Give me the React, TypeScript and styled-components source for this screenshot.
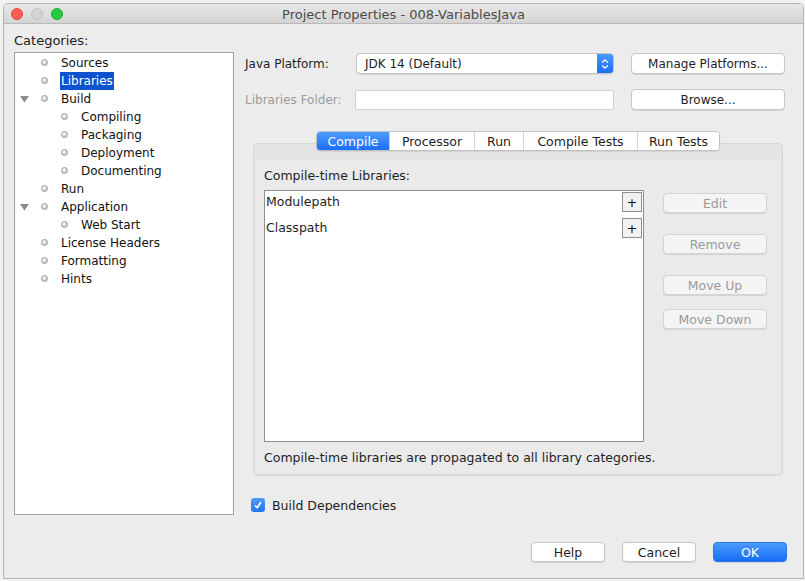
import React from "react";
import styled, { createGlobalStyle } from "styled-components";

const Global = createGlobalStyle`
  html, body { margin: 0; padding: 0; }
  body {
    background: #f2f2f2;
    font-family: "DejaVu Sans", "Liberation Sans", sans-serif;
    font-size: 12px;
    color: #1e1e1e;
  }
`;

const Page = styled.div`
  width: 805px;
  height: 581px;
  overflow: hidden;
  padding: 3px 0 0 3px;
  box-sizing: border-box;
`;

const Window = styled.div`
  width: 801px;
  height: 576px;
  box-sizing: border-box;
  border: 1px solid #b3b3b3;
  border-radius: 5px 5px 0 0;
  background: #ececec;
  display: flex;
  flex-direction: column;
  overflow: hidden;
`;

const TitleBar = styled.div`
  height: 19px;
  flex: none;
  display: grid;
  grid-template-columns: 1fr auto 1fr;
  align-items: center;
  background: linear-gradient(#e8e8e8, #d4d4d4);
  border-bottom: 1px solid #b9b9b9;
`;

const Lights = styled.div`
  display: flex;
  gap: 8px;
  padding-left: 7px;
  padding-top: 1px;
`;

const Light = styled.span<{ $c: string; $b: string }>`
  width: 12px;
  height: 12px;
  border-radius: 50%;
  box-sizing: border-box;
  background: ${(p) => p.$c};
  border: 1px solid ${(p) => p.$b};
`;

const Title = styled.div`
  font-size: 13px;
  color: #4a4a4a;
  padding-top: 1px;
`;

const Body = styled.div`
  display: flex;
  padding: 9px 0 0 10px;
  height: 491px;
  box-sizing: border-box;
`;

const LeftCol = styled.div`
  display: flex;
  flex-direction: column;
  width: 220px;
`;

const Caption = styled.div`
  height: 16px;
  line-height: 16px;
  font-size: 13px;
  margin-bottom: 3px;
`;

const TreeBox = styled.div`
  height: 463px;
  box-sizing: border-box;
  background: #fff;
  border: 1px solid #9e9e9e;
  padding-top: 1px;
`;

const TreeRow = styled.div<{ $level: number }>`
  height: 18px;
  display: flex;
  align-items: center;
  padding-left: ${(p) => p.$level * 20}px;
`;

const ToggleSlot = styled.span`
  width: 26px;
  height: 18px;
  display: flex;
  align-items: center;
  padding-left: 5px;
  box-sizing: border-box;
`;

const Bullet = styled.span`
  width: 7px;
  height: 7px;
  border-radius: 50%;
  box-sizing: border-box;
  background: radial-gradient(circle at 40% 35%, #ffffff, #c8c8c8 70%);
  border: 1px solid #9a9a9a;
  margin-right: 12px;
  margin-top: -2px;
`;

const TreeLabel = styled.span<{ $sel?: boolean }>`
  height: 18px;
  line-height: 18px;
  padding: 0 1px;
  font-size: 12px;
  background: ${(p) => (p.$sel ? "#0d53d0" : "transparent")};
  color: ${(p) => (p.$sel ? "#fff" : "#111")};
`;

const RightCol = styled.div`
  margin-left: 11px;
  width: 542px;
  display: flex;
  flex-direction: column;
  padding-top: 20px;
`;

const FormRow = styled.div<{ $mt?: number }>`
  display: grid;
  grid-template-columns: 94px 258px 154px;
  column-gap: 17px;
  align-items: center;
  margin-top: ${(p) => p.$mt ?? 0}px;
`;

const FieldLabel = styled.label<{ $dim?: boolean }>`
  font-size: 12px;
  white-space: nowrap;
  color: ${(p) => (p.$dim ? "#9c9c9c" : "#1e1e1e")};
`;

const Combo = styled.div`
  height: 21px;
  box-sizing: border-box;
  border: 1px solid #c4c4c4;
  border-radius: 4px;
  background: #fff;
  display: flex;
  align-items: center;
  box-shadow: 0 1px 1px rgba(0, 0, 0, 0.08);
  overflow: hidden;
`;

const ComboText = styled.span`
  flex: 1;
  padding-left: 8px;
`;

const Stepper = styled.span`
  width: 16px;
  height: 100%;
  background: linear-gradient(#4a98fd, #1a6ef4);
  display: flex;
  align-items: center;
  justify-content: center;
`;

const TextField = styled.div`
  height: 20px;
  width: 259px;
  margin-left: -1px;
  box-sizing: border-box;
  border: 1px solid #d3d3d3;
  background: #fff;
`;

const Button = styled.button<{ $disabled?: boolean; $primary?: boolean }>`
  height: 21px;
  box-sizing: border-box;
  border-radius: 4px;
  font-family: inherit;
  font-size: 12px;
  padding: 0;
  border: 1px solid ${(p) => (p.$primary ? "#2a74f0" : p.$disabled ? "#d4d4d4" : "#c6c6c6")};
  background: ${(p) =>
    p.$primary ? "linear-gradient(#4c9afd, #176cf4)" : p.$disabled ? "#f4f4f4" : "#fff"};
  color: ${(p) => (p.$primary ? "#fff" : p.$disabled ? "#9a9a9a" : "#1e1e1e")};
  box-shadow: 0 1px 1px rgba(0, 0, 0, 0.1);
`;

const TabArea = styled.div`
  margin: 21px 4px 0 8px;
  display: flex;
  flex-direction: column;
  align-items: center;
`;

const Tabs = styled.div`
  display: flex;
  height: 20px;
  box-sizing: border-box;
  border: 1px solid #c2c2c2;
  border-radius: 4px;
  background: #fff;
  overflow: hidden;
  margin-bottom: -8px;
  position: relative;
  z-index: 1;
  box-shadow: 0 1px 1px rgba(0, 0, 0, 0.08);
`;

const Tab = styled.div<{ $w: number; $active?: boolean }>`
  width: ${(p) => p.$w}px;
  display: flex;
  align-items: center;
  justify-content: center;
  font-size: 12.5px;
  border-left: 1px solid #d4d4d4;
  &:first-child { border-left: none; }
  background: ${(p) => (p.$active ? "linear-gradient(#4e9cfd, #1a6ef4)" : "#fff")};
  color: ${(p) => (p.$active ? "#fff" : "#1e1e1e")};
`;

const Panel = styled.div`
  width: 100%;
  height: 333px;
  box-sizing: border-box;
  border: 1px solid #d6d6d6;
  border-radius: 4px;
  background: #e4e4e4;
  padding: 16px 2px 2px 2px;
  display: flex;
`;

const PanelInner = styled.div`
  flex: 1;
  background: #eaeaea;
  padding: 8px 0 0 8px;
  display: flex;
  flex-direction: column;
`;

const PanelCaption = styled.div`
  height: 16px;
  line-height: 16px;
  font-size: 12.5px;
  margin-bottom: 6px;
`;

const ListRow = styled.div`
  display: flex;
  gap: 19px;
`;

const ListBox = styled.div`
  width: 380px;
  height: 252px;
  box-sizing: border-box;
  background: #fff;
  border: 1px solid #8e8e8e;
  padding-top: 1px;
`;

const ListItem = styled.div`
  height: 26px;
  display: flex;
  align-items: flex-start;
  justify-content: space-between;
  padding: 0 1px 0 1px;
`;

const ListText = styled.span`
  line-height: 20px;
  font-size: 12.5px;
`;

const PlusBox = styled.span`
  width: 20px;
  height: 20px;
  box-sizing: border-box;
  border: 1px solid #8f8f8f;
  background: #f2f2f2;
  display: flex;
  align-items: center;
  justify-content: center;
  font-size: 13px;
  line-height: 1;
  color: #111;
`;

const SideButtons = styled.div`
  width: 104px;
  padding-top: 3px;
  display: flex;
  flex-direction: column;
`;

const SideButton = styled(Button)<{ $mt: number }>`
  height: 20px;
  margin-top: ${(p) => p.$mt}px;
  font-size: 12.5px;
`;

const Note = styled.div`
  margin-top: 8px;
  line-height: 16px;
  font-size: 12.5px;
`;

const CheckRow = styled.label`
  margin: 22px 0 0 6px;
  display: flex;
  align-items: center;
  gap: 7px;
  font-size: 12.5px;
  height: 14px;
`;

const CheckBox = styled.span`
  width: 14px;
  height: 14px;
  border-radius: 3px;
  background: linear-gradient(#4f9cfd, #2474f3);
  display: flex;
  align-items: center;
  justify-content: center;
`;

const Footer = styled.div`
  display: flex;
  justify-content: flex-end;
  padding: 27px 16px 0 0;
  gap: 17px;
`;

const FooterButton = styled(Button)`
  width: 74px;
  height: 20px;
  font-size: 12.5px;
`;

type Node = { label: string; level: number; toggle?: boolean; sel?: boolean };

const tree: Node[] = [
  { label: "Sources", level: 0 },
  { label: "Libraries", level: 0, sel: true },
  { label: "Build", level: 0, toggle: true },
  { label: "Compiling", level: 1 },
  { label: "Packaging", level: 1 },
  { label: "Deployment", level: 1 },
  { label: "Documenting", level: 1 },
  { label: "Run", level: 0 },
  { label: "Application", level: 0, toggle: true },
  { label: "Web Start", level: 1 },
  { label: "License Headers", level: 0 },
  { label: "Formatting", level: 0 },
  { label: "Hints", level: 0 },
];

const tabs = [
  { label: "Compile", w: 72, active: true },
  { label: "Processor", w: 84 },
  { label: "Run", w: 48 },
  { label: "Compile Tests", w: 113 },
  { label: "Run Tests", w: 81 },
];

const Triangle = () => (
  <svg width="9" height="7" viewBox="0 0 9 7">
    <path d="M0 0 L9 0 L4.5 6.5 Z" fill="#8c8c8c" />
  </svg>
);

export default function App() {
  return (
    <>
      <Global />
      <Page>
        <Window>
          <TitleBar>
            <Lights>
              <Light $c="#fd5e57" $b="#e2463f" />
              <Light $c="#d3d3d3" $b="#c0c0c0" />
              <Light $c="#27c93f" $b="#1dad2b" />
            </Lights>
            <Title>Project Properties - 008-VariablesJava</Title>
            <span />
          </TitleBar>
          <Body>
            <LeftCol>
              <Caption>Categories:</Caption>
              <TreeBox>
                {tree.map((n) => (
                  <TreeRow key={n.label} $level={n.level}>
                    <ToggleSlot>{n.toggle && <Triangle />}</ToggleSlot>
                    <Bullet />
                    <TreeLabel $sel={n.sel}>{n.label}</TreeLabel>
                  </TreeRow>
                ))}
              </TreeBox>
            </LeftCol>
            <RightCol>
              <FormRow>
                <FieldLabel>Java Platform:</FieldLabel>
                <Combo>
                  <ComboText>JDK 14 (Default)</ComboText>
                  <Stepper>
                    <svg width="8" height="12" viewBox="0 0 8 12">
                      <path d="M1.2 4.5 L4 1.8 L6.8 4.5 M1.2 7.5 L4 10.2 L6.8 7.5" stroke="#fff" strokeWidth="1.3" fill="none" />
                    </svg>
                  </Stepper>
                </Combo>
                <Button>Manage Platforms...</Button>
              </FormRow>
              <FormRow $mt={15}>
                <FieldLabel $dim>Libraries Folder:</FieldLabel>
                <TextField />
                <Button>Browse...</Button>
              </FormRow>
              <TabArea>
                <Tabs>
                  {tabs.map((t) => (
                    <Tab key={t.label} $w={t.w} $active={t.active}>
                      {t.label}
                    </Tab>
                  ))}
                </Tabs>
                <Panel>
                  <PanelInner>
                    <PanelCaption>Compile-time Libraries:</PanelCaption>
                    <ListRow>
                      <ListBox>
                        <ListItem>
                          <ListText>Modulepath</ListText>
                          <PlusBox>+</PlusBox>
                        </ListItem>
                        <ListItem>
                          <ListText>Classpath</ListText>
                          <PlusBox>+</PlusBox>
                        </ListItem>
                      </ListBox>
                      <SideButtons>
                        <SideButton $disabled $mt={0}>Edit</SideButton>
                        <SideButton $disabled $mt={21}>Remove</SideButton>
                        <SideButton $disabled $mt={21}>Move Up</SideButton>
                        <SideButton $disabled $mt={14}>Move Down</SideButton>
                      </SideButtons>
                    </ListRow>
                    <Note>Compile-time libraries are propagated to all library categories.</Note>
                  </PanelInner>
                </Panel>
              </TabArea>
              <CheckRow>
                <CheckBox>
                  <svg width="10" height="10" viewBox="0 0 10 10">
                    <path d="M2 5.5 L4.2 7.8 L8 2" stroke="#fff" strokeWidth="1.6" fill="none" />
                  </svg>
                </CheckBox>
                Build Dependencies
              </CheckRow>
            </RightCol>
          </Body>
          <Footer>
            <FooterButton>Help</FooterButton>
            <FooterButton>Cancel</FooterButton>
            <FooterButton $primary>OK</FooterButton>
          </Footer>
        </Window>
      </Page>
    </>
  );
}
